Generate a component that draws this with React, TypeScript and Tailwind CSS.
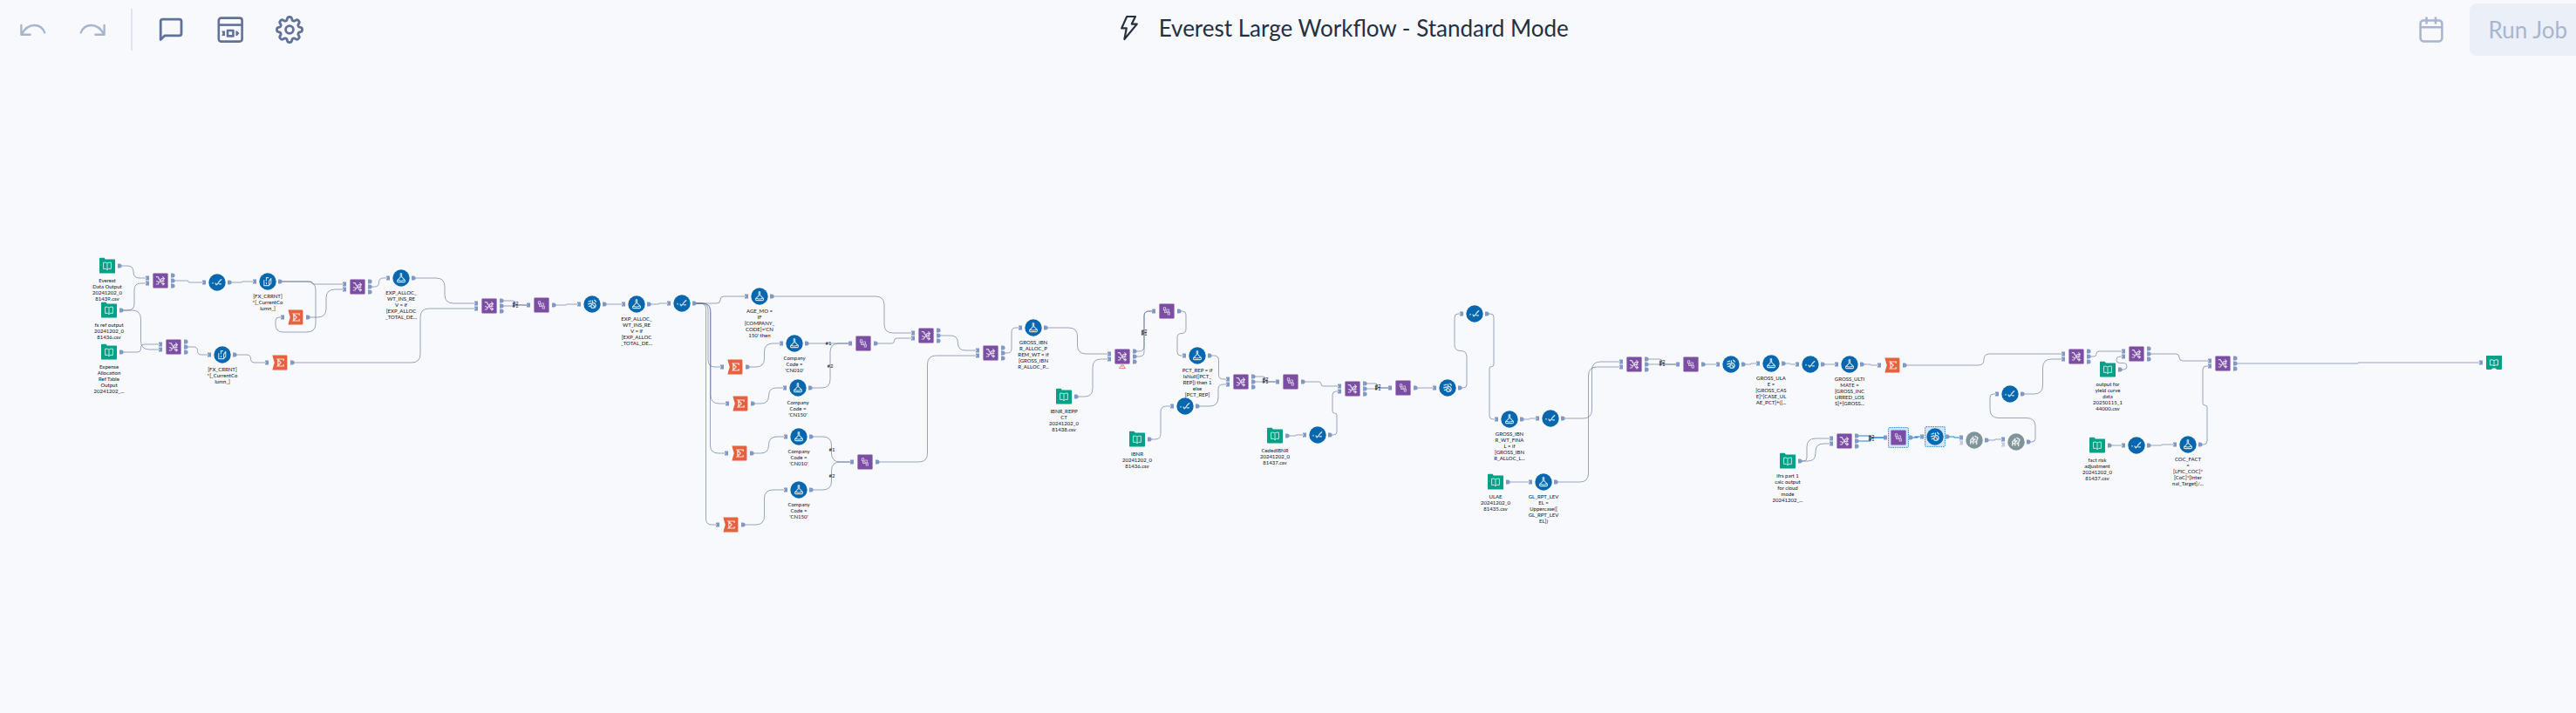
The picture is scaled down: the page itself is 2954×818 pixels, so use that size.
import type { ReactNode } from "react";

type Kind = "file" | "join" | "union" | "select" | "multi" | "formula" | "cleanse" | "sum" | "tool" | "output";

interface FlowNode {
  id: string;
  kind: Kind;
  x: number;
  y: number;
  label?: string;
  selected?: boolean;
  warning?: boolean;
}

interface FlowEdge {
  from: string;
  to: string;
  out?: number;
  input?: number;
  via?: number;
  tag?: string;
  active?: boolean;
}

const HEADER_HEIGHT = 68;

const nodes: FlowNode[] = [
  { id: "f1", kind: "file", x: 123, y: 305, label: "Everest\nData Output\n20241202_0\n81439.csv" },
  { id: "f2", kind: "file", x: 125, y: 356, label: "fx ref output\n20241202_0\n81436.csv" },
  { id: "f3", kind: "file", x: 125, y: 404, label: "Expense\nAllocation\nRef Table\nOutput\n20241202_..." },
  { id: "j1", kind: "join", x: 184, y: 322 },
  { id: "s1", kind: "select", x: 249, y: 324 },
  { id: "m1", kind: "multi", x: 307, y: 323, label: "[FX_CRRNT]\n*[_CurrentCo\nlumn_]" },
  { id: "g1", kind: "sum", x: 339, y: 364 },
  { id: "j2", kind: "join", x: 410, y: 329 },
  { id: "a1", kind: "formula", x: 460, y: 319, label: "EXP_ALLOC_\nWT_INS_RE\nV = if\n[EXP_ALLOC\n_TOTAL_DE..." },
  { id: "j3", kind: "join", x: 199, y: 398 },
  { id: "m2", kind: "multi", x: 255, y: 407, label: "[FX_CRRNT]\n*[_CurrentCo\nlumn_]" },
  { id: "g2", kind: "sum", x: 321, y: 416 },
  { id: "j4", kind: "join", x: 561, y: 351 },
  { id: "u1", kind: "union", x: 621, y: 350 },
  { id: "c1", kind: "cleanse", x: 679, y: 349 },
  { id: "a2", kind: "formula", x: 730, y: 349, label: "EXP_ALLOC_\nWT_INS_RE\nV = if\n[EXP_ALLOC\n_TOTAL_DE..." },
  { id: "s2", kind: "select", x: 782, y: 348 },
  { id: "a3", kind: "formula", x: 871, y: 340, label: "AGE_MO =\nIF\n[COMPANY_\nCODE]='CN\n150' then" },
  { id: "g3", kind: "sum", x: 843, y: 421 },
  { id: "g4", kind: "sum", x: 849, y: 463 },
  { id: "g5", kind: "sum", x: 848, y: 520 },
  { id: "g6", kind: "sum", x: 838, y: 602 },
  { id: "a4", kind: "formula", x: 911, y: 394, label: "Company\nCode =\n'CN010'" },
  { id: "a5", kind: "formula", x: 915, y: 445, label: "Company\nCode =\n'CN150'" },
  { id: "a6", kind: "formula", x: 916, y: 501, label: "Company\nCode =\n'CN010'" },
  { id: "a7", kind: "formula", x: 916, y: 562, label: "Company\nCode =\n'CN150'" },
  { id: "u2", kind: "union", x: 990, y: 394 },
  { id: "u3", kind: "union", x: 992, y: 530 },
  { id: "j5", kind: "join", x: 1062, y: 385 },
  { id: "j6", kind: "join", x: 1136, y: 405 },
  { id: "a8", kind: "formula", x: 1185, y: 376, label: "GROSS_IBN\nR_ALLOC_P\nREM_WT = if\n[GROSS_IBN\nR_ALLOC_P..." },
  { id: "f4", kind: "file", x: 1220, y: 455, label: "IBNR_REPP\nCT\n20241202_0\n81438.csv" },
  { id: "j7", kind: "join", x: 1287, y: 409, warning: true },
  { id: "u4", kind: "union", x: 1338, y: 357 },
  { id: "a9", kind: "formula", x: 1373, y: 408, label: "PCT_REP = if\nIsNull([PCT_\nREP]) then 1\nelse\n[PCT_REP]" },
  { id: "s3", kind: "select", x: 1359, y: 466 },
  { id: "f5", kind: "file", x: 1304, y: 504, label: "IBNR\n20241202_0\n81436.csv" },
  { id: "j8", kind: "join", x: 1423, y: 438 },
  { id: "u5", kind: "union", x: 1480, y: 438 },
  { id: "f6", kind: "file", x: 1462, y: 500, label: "CededIBNR\n20241202_0\n81437.csv" },
  { id: "s4", kind: "select", x: 1511, y: 499 },
  { id: "j9", kind: "join", x: 1551, y: 446 },
  { id: "u6", kind: "union", x: 1609, y: 445 },
  { id: "c2", kind: "cleanse", x: 1660, y: 445 },
  { id: "s5", kind: "select", x: 1691, y: 360 },
  { id: "a10", kind: "formula", x: 1731, y: 481, label: "GROSS_IBN\nR_WT_FINA\nL = if\n[GROSS_IBN\nR_ALLOC_L..." },
  { id: "s6", kind: "select", x: 1778, y: 480 },
  { id: "f7", kind: "file", x: 1715, y: 553, label: "ULAE\n20241202_0\n81435.csv" },
  { id: "a11", kind: "formula", x: 1770, y: 553, label: "GL_RPT_LEV\nEL =\nUppercase([\nGL_RPT_LEV\nEL])" },
  { id: "j10", kind: "join", x: 1874, y: 418 },
  { id: "u7", kind: "union", x: 1939, y: 418 },
  { id: "c3", kind: "cleanse", x: 1985, y: 418 },
  { id: "a12", kind: "formula", x: 2031, y: 417, label: "GROSS_ULA\nE =\n[GROSS_CAS\nE]*[CASE_UL\nAE_PCT]+([..." },
  { id: "s7", kind: "select", x: 2076, y: 418 },
  { id: "a13", kind: "formula", x: 2121, y: 418, label: "GROSS_ULTI\nMATE =\n[GROSS_INC\nURRED_LOS\nS]+[GROSS..." },
  { id: "g7", kind: "sum", x: 2170, y: 419 },
  { id: "f8", kind: "file", x: 2050, y: 529, label: "ifrs part 1\ncalc output\nfor cloud\nmode\n20241202_..." },
  { id: "j11", kind: "join", x: 2115, y: 506 },
  { id: "u8", kind: "union", x: 2177, y: 502, selected: true },
  { id: "c4", kind: "cleanse", x: 2219, y: 501, selected: true },
  { id: "t1", kind: "tool", x: 2264, y: 505 },
  { id: "t2", kind: "tool", x: 2312, y: 507 },
  { id: "s8", kind: "select", x: 2305, y: 452 },
  { id: "j12", kind: "join", x: 2381, y: 409 },
  { id: "f9", kind: "file", x: 2417, y: 424, label: "output for\nyield curve\ndata\n20250115_1\n44000.csv" },
  { id: "j13", kind: "join", x: 2450, y: 406 },
  { id: "f10", kind: "file", x: 2405, y: 511, label: "fact risk\nadjustment\n20241202_0\n81437.csv" },
  { id: "s9", kind: "select", x: 2450, y: 511 },
  { id: "a14", kind: "formula", x: 2509, y: 510, label: "COC_FACT\n=\n[LFIC_COC]*\n[CoC]*[Inter\nnal_Target]/..." },
  { id: "j14", kind: "join", x: 2549, y: 417 },
  { id: "o1", kind: "output", x: 2860, y: 416 },
];

const edges: FlowEdge[] = [
  { from: "f1", to: "j1" },
  { from: "f2", to: "j1", input: 1 },
  { from: "f2", to: "j3", input: 1 },
  { from: "f3", to: "j3" },
  { from: "j1", to: "s1", out: 1 },
  { from: "s1", to: "m1" },
  { from: "m1", to: "j2" },
  { from: "g1", to: "j2", input: 1 },
  { from: "j2", to: "a1", out: 1 },
  { from: "j3", to: "m2", out: 1 },
  { from: "m2", to: "g2" },
  { from: "a1", to: "j4" },
  { from: "g2", to: "j4", input: 1, via: 482 },
  { from: "j4", to: "u1", out: 0, tag: "#2" },
  { from: "j4", to: "u1", out: 1, tag: "#1" },
  { from: "u1", to: "c1" },
  { from: "c1", to: "a2" },
  { from: "a2", to: "s2" },
  { from: "s2", to: "a3" },
  { from: "s2", to: "g3" },
  { from: "s2", to: "g4" },
  { from: "s2", to: "g5" },
  { from: "s2", to: "g6" },
  { from: "g3", to: "a4" },
  { from: "g4", to: "a5" },
  { from: "g5", to: "a6" },
  { from: "g6", to: "a7" },
  { from: "a3", to: "j5", via: 1014 },
  { from: "a4", to: "u2", tag: "#1" },
  { from: "a5", to: "u2", tag: "#2" },
  { from: "a6", to: "u3", tag: "#1" },
  { from: "a7", to: "u3", tag: "#2" },
  { from: "u2", to: "j5", input: 1 },
  { from: "u3", to: "j6", input: 1 },
  { from: "j5", to: "j6", out: 1 },
  { from: "j6", to: "a8", out: 1 },
  { from: "a8", to: "j7" },
  { from: "f4", to: "j7", input: 1 },
  { from: "j7", to: "u4", out: 0, tag: "#2" },
  { from: "j7", to: "u4", out: 1, tag: "#1" },
  { from: "u4", to: "a9" },
  { from: "a9", to: "j8" },
  { from: "f5", to: "s3" },
  { from: "s3", to: "j8", input: 1, via: 1397 },
  { from: "j8", to: "u5", out: 0, tag: "#2" },
  { from: "j8", to: "u5", out: 1, tag: "#1" },
  { from: "u5", to: "j9" },
  { from: "f6", to: "s4" },
  { from: "s4", to: "j9", input: 1 },
  { from: "j9", to: "u6", out: 0, tag: "#2" },
  { from: "j9", to: "u6", out: 1, tag: "#1" },
  { from: "u6", to: "c2" },
  { from: "c2", to: "s5" },
  { from: "s5", to: "a10" },
  { from: "a10", to: "s6" },
  { from: "s6", to: "j10" },
  { from: "f7", to: "a11" },
  { from: "a11", to: "j10", input: 1 },
  { from: "j10", to: "u7", out: 0, tag: "#2" },
  { from: "j10", to: "u7", out: 1, tag: "#1" },
  { from: "u7", to: "c3" },
  { from: "c3", to: "a12" },
  { from: "a12", to: "s7" },
  { from: "s7", to: "a13" },
  { from: "a13", to: "g7" },
  { from: "g7", to: "j12" },
  { from: "f8", to: "j11", via: 2072 },
  { from: "f8", to: "j11", input: 1 },
  { from: "j11", to: "u8", out: 0, tag: "#2", active: true },
  { from: "j11", to: "u8", out: 1, tag: "#1", active: true },
  { from: "u8", to: "c4", active: true },
  { from: "c4", to: "t1", active: true },
  { from: "t1", to: "t2" },
  { from: "t2", to: "s8" },
  { from: "s8", to: "j12", input: 1 },
  { from: "j12", to: "j13", out: 1, via: 2404 },
  { from: "f9", to: "j13", input: 1 },
  { from: "f10", to: "s9" },
  { from: "s9", to: "a14" },
  { from: "a14", to: "j14", input: 1 },
  { from: "j13", to: "j14", out: 1 },
  { from: "j14", to: "o1", out: 1 },
];

const byId = new Map(nodes.map((n) => [n.id, n]));

type Point = [number, number];

function inputs(n: FlowNode): Point[] {
  if (n.kind === "file") return [];
  if (n.kind === "join" || n.kind === "tool") return [[n.x - 15, n.y - 3], [n.x - 15, n.y + 3]];
  return [[n.x - 15, n.y]];
}

function outputs(n: FlowNode): Point[] {
  if (n.kind === "output") return [];
  if (n.kind === "join") return [[n.x + 14, n.y - 6], [n.x + 14, n.y], [n.x + 14, n.y + 6]];
  return [[n.x + 14, n.y]];
}

function rounded(points: Point[], radius = 10): string {
  let d = `M${points[0][0]} ${points[0][1]}`;
  for (let i = 1; i < points.length - 1; i++) {
    const [px, py] = points[i - 1];
    const [x, y] = points[i];
    const [nx, ny] = points[i + 1];
    const a = Math.abs(x - px) + Math.abs(y - py);
    const b = Math.abs(nx - x) + Math.abs(ny - y);
    const r = Math.min(radius, a / 2, b / 2);
    if (r === 0) continue;
    d += `L${x - Math.sign(x - px) * r} ${y - Math.sign(y - py) * r}`;
    d += `Q${x} ${y} ${x + Math.sign(nx - x) * r} ${y + Math.sign(ny - y) * r}`;
  }
  const last = points[points.length - 1];
  return `${d}L${last[0]} ${last[1]}`;
}

function route(e: FlowEdge): { d: string; mid: Point } {
  const [sx, sy] = outputs(byId.get(e.from)!)[e.out ?? 0];
  const [tx, ty] = inputs(byId.get(e.to)!)[e.input ?? 0];
  const midY = (sy + ty) / 2;
  if (tx - sx < 16) {
    return {
      d: rounded([[sx, sy], [sx + 8, sy], [sx + 8, midY], [tx - 8, midY], [tx - 8, ty], [tx, ty]]),
      mid: [(sx + tx) / 2, midY],
    };
  }
  const midX = e.via ?? (sx + tx) / 2;
  return { d: rounded([[sx, sy], [midX, sy], [midX, ty], [tx, ty]]), mid: [midX, midY] };
}

function Connections() {
  return (
    <svg className="absolute inset-0 h-full w-full" aria-hidden="true">
      <g transform={`translate(0 ${-HEADER_HEIGHT})`}>
        <g fill="none" stroke="#5b698f" strokeWidth="0.6">
          {edges.map((e, i) => (
            <path
              key={i}
              d={route(e).d}
              stroke={e.active ? "#1585e8" : undefined}
              strokeWidth={e.active ? 1.1 : undefined}
            />
          ))}
          <path d={rounded([[321, 323], [362, 323], [362, 381], [316, 381], [316, 364], [324, 364]])} />
        </g>
        {nodes.map((n) => (
          <g key={n.id} fill="#8299c3">
            {inputs(n).map(([x, y], i) => (
              <path
                key={`i${i}`}
                d={`M${x - 2} ${y - 2.5}h4v5h-4v-1.6h1v-1.8h-1z`}
                opacity={n.kind === "tool" && i === 1 ? 0.45 : 1}
              />
            ))}
            {outputs(n).map(([x, y], i) => (
              <path key={`o${i}`} d={`M${x - 2} ${y - 2.5}h2q2.6 0 2.6 2.5t-2.6 2.5h-2z`} />
            ))}
          </g>
        ))}
      </g>
    </svg>
  );
}

function Disc({ color, children }: { color: string; children: ReactNode }) {
  return (
    <>
      <circle r="9.7" fill={color} />
      <g fill="none" stroke="#fff" strokeWidth="1.1" strokeOpacity="0.8" strokeLinecap="round" strokeLinejoin="round">
        {children}
      </g>
    </>
  );
}

function Tile({ children }: { children: ReactNode }) {
  return (
    <>
      <rect x="-8.6" y="-8.6" width="17.2" height="17.2" rx="1" fill="#7b4ea3" />
      <g fill="none" stroke="#fff" strokeWidth="1.1" strokeOpacity="0.75" strokeLinecap="round" strokeLinejoin="round">
        {children}
      </g>
    </>
  );
}

function Glyph({ kind }: { kind: Kind }) {
  switch (kind) {
    case "file":
      return (
        <>
          <path d="M-9 -8.5Q-9 -9.2 -8 -9.2H-3.4L-2.2 -7.6H8.4Q9 -7.6 9 -7V7.8Q9 8.6 8.2 8.6H-8.2Q-9 8.6 -9 7.8Z" fill="#05a088" />
          <path
            d="M-4.4 -3.8Q-2 -4.4 0 -3Q2 -4.4 4.4 -3.8V3.4H2M-4.4 -3.8V3.4H-2M0 -2.6V4.6M-1.8 2.8L0 4.8L1.8 2.8"
            fill="none"
            stroke="#fff"
            strokeOpacity="0.75"
            strokeWidth="1"
          />
        </>
      );
    case "output":
      return (
        <>
          <path d="M-9 -8H9V7Q9 8 8 8H3L2 6.5H-2L-3 8H-8Q-9 8 -9 7Z" fill="#05a088" />
          <path
            d="M-4.5 -3Q-2 -3.8 0 -2.4Q2 -3.8 4.5 -3V3Q2 2.4 0 3.6Q-2 2.4 -4.5 3ZM0 -2.4V3.4"
            fill="none"
            stroke="#fff"
            strokeOpacity="0.8"
            strokeWidth="1"
          />
        </>
      );
    case "sum":
      return (
        <>
          <path d="M-8.6 -8.4H7.6Q8.4 -8.4 8.4 -7.6V7.6Q8.4 8.4 7.6 8.4H-8.6L-7.6 4.4L-6.2 0L-7.6 -4.4Z" fill="#e8613f" />
          <path
            d="M4.2 -2V-4H-2.8L1.2 0L-2.8 4H4.2V2M-2.2 -4V4"
            fill="none"
            stroke="#fff"
            strokeOpacity="0.8"
            strokeWidth="1.2"
          />
        </>
      );
    case "join":
      return (
        <Tile>
          <path d="M-4.8 -4.4H-2.8L1.8 3.6H4.4M-4.8 4H-2.8L1.2 -2.4H4.6M-2.8 -4.4L-1.6 -1.6M-4.4 0.6L-2.4 1.6M2.6 -4.4L4.6 -2.4L2.8 -0.6M2.6 1.8L4.6 3.6L2.8 5M0.6 0.4H4" />
        </Tile>
      );
    case "union":
      return (
        <Tile>
          <g strokeOpacity="0.6">
            <path d="M-3.6 -4.2H-1.4V-1.4H-3.6ZM1.2 1.2H3.4V4H1.2ZM-1.4 -1.4L1.2 1.2M-2.4 -1V1.4H1M0 -2H2.4V1" />
          </g>
        </Tile>
      );
    case "select":
      return (
        <Disc color="#0767ae">
          <path d="M-5 0.4V1M-2 1L-0.8 2.8L1.6 0.6M1.8 -0.6L4.8 -3.4M2.4 1.8H4.4" strokeWidth="1.3" />
        </Disc>
      );
    case "multi":
      return (
        <Disc color="#0767ae">
          <path d="M-1.6 -1V-4.4H0.6M-4.2 -1.4V4.6H1.6V-0.6L3.8 -3.6M1.6 4.4L3.8 2V-3.4M-1.4 1.4V2.8" />
        </Disc>
      );
    case "formula":
      return (
        <Disc color="#0767ae">
          <path d="M-0.8 -5.2H0.6V-1.4L4.4 2.4Q4.8 4.6 3.2 4.6H-3.2Q-4.8 4.6 -4.4 2.6L-0.8 -0.8V-5.2M-3.6 2.2Q0 3.8 3.6 2" />
        </Disc>
      );
    case "cleanse":
      return (
        <Disc color="#0767ae">
          <path
            d="M-4 -3L-1.4 -3.8M-4.4 -0.2L-1.4 -1M-3.6 2.6L-1 1.6M0.4 -4.2V-1.4Q3.6 -2 4.2 1.4Q3.8 4.6 0.4 4.4Q-1.6 4.2 -1 1.6M2.6 -4.8L4.4 -3M0.8 0.6L2.6 2.4M0.4 -1.4L-1 1.6"
            strokeWidth="1.3"
          />
        </Disc>
      );
    case "tool":
      return (
        <Disc color="#7f9499">
          <path d="M-4.2 4V0L-1.2 -3.6V4M1 -4.6L4 -2.6L2.6 1V4.4M-1.2 0.6L1 -1.4M-4 1.8H-1.4M1 2L2.6 1" strokeWidth="1.5" />
        </Disc>
      );
  }
}

function NodeView({ node }: { node: FlowNode }) {
  return (
    <div
      className="absolute flex w-12 flex-col items-center"
      style={{ left: node.x - 24, top: node.y - HEADER_HEIGHT - 12 }}
    >
      <svg viewBox="-12 -12 24 24" className="size-6 shrink-0 overflow-visible" aria-hidden="true">
        {node.selected && (
          <rect x="-11.4" y="-11.4" width="22.8" height="22.8" rx="1" fill="#d3e6fb" stroke="#1585e8" strokeWidth="0.9" strokeDasharray="1.6 1" />
        )}
        <Glyph kind={node.kind} />
        {node.warning && (
          <path d="M0 8L3.4 13.6H-3.4ZM0 10V12" fill="#fdf1ee" stroke="#ee7a60" strokeWidth="0.9" strokeLinejoin="round" />
        )}
      </svg>
      {node.label && (
        <p className="mt-px text-center font-['Lato',sans-serif] text-[6px] leading-[7px] font-medium whitespace-pre text-[#1f2937]">
          {node.label}
        </p>
      )}
    </div>
  );
}

function Tags() {
  return (
    <>
      {edges.map((e, i) => {
        if (!e.tag) return null;
        const [x, y] = route(e).mid;
        return (
          <span
            key={i}
            className="absolute w-4 text-center font-['Lato',sans-serif] text-[6px] leading-[8px] font-medium text-[#1f2937]"
            style={{ left: Math.round(x) - 8, top: Math.round(y) - HEADER_HEIGHT - 4 }}
          >
            {e.tag}
          </span>
        );
      })}
    </>
  );
}

function UndoIcon({ flip = false }: { flip?: boolean }) {
  return (
    <svg viewBox="0 0 32 32" className="size-8" fill="none" stroke="#a9b5cc" strokeWidth="2.4" strokeLinecap="round" strokeLinejoin="round" aria-hidden="true">
      <path d="M2.4 11V21.8H12.6M2.8 21.4C6.5 14.6 11 11 17.4 11C23.4 11 27.2 14.2 29.2 19.4" transform={flip ? "translate(32 0) scale(-1 1)" : undefined} />
    </svg>
  );
}

function gearPath(): string {
  const pts: string[] = [];
  for (let i = 0; i < 160; i++) {
    const t = (i / 160) * Math.PI * 2;
    const r = 12.7 + 1.9 * Math.tanh(1.8 * (Math.cos(8 * t) + 0.1));
    pts.push(`${(16 + r * Math.cos(t)).toFixed(2)} ${(16 + r * Math.sin(t)).toFixed(2)}`);
  }
  return `M${pts.join("L")}Z`;
}

function ToolButton({ label, disabled, children }: { label: string; disabled?: boolean; children: ReactNode }) {
  return (
    <button type="button" aria-label={label} disabled={disabled} className="flex size-12 shrink-0 items-center justify-center">
      {children}
    </button>
  );
}

function Header() {
  return (
    <header className="flex h-17 shrink-0 items-center">
      <div className="flex items-center gap-5 pl-3.5">
        <ToolButton label="Undo" disabled>
          <UndoIcon />
        </ToolButton>
        <ToolButton label="Redo" disabled>
          <UndoIcon flip />
        </ToolButton>
        <div className="h-12 w-0.5 bg-[#dde4f1]" />
        <ToolButton label="Comments">
          <svg viewBox="0 0 32 32" className="size-8" fill="none" stroke="#62719a" strokeWidth="2.8" strokeLinejoin="round" aria-hidden="true">
            <path d="M4.2 27.6V6.4Q4.2 4.2 6.4 4.2H25.8Q28 4.2 28 6.4V20.6Q28 22.8 25.8 22.8H9Z" />
          </svg>
        </ToolButton>
        <ToolButton label="Configuration window">
          <svg viewBox="0 0 32 32" className="size-8" fill="none" stroke="#62719a" strokeWidth="2.6" strokeLinejoin="round" aria-hidden="true">
            <rect x="2.8" y="2.6" width="26.8" height="27" rx="2.8" />
            <path d="M3 10.6H29.4" />
            <rect x="13" y="17" width="6.4" height="6.4" />
            <path d="M6.2 17.6H10V23H6.2L7.4 20.3ZM22.4 17.6H24L26.4 20.3L24 23H22.4Z" fill="#62719a" stroke="none" />
          </svg>
        </ToolButton>
        <ToolButton label="Settings">
          <svg viewBox="0 0 32 32" className="size-8 overflow-visible" fill="none" stroke="#62719a" strokeWidth="2.8" strokeLinejoin="round" aria-hidden="true">
            <path d={gearPath()} />
            <circle cx="16" cy="16" r="4.4" />
          </svg>
        </ToolButton>
      </div>
      <div className="flex min-w-0 flex-1 items-center justify-center gap-6 pr-9 pb-1">
        <svg viewBox="0 0 20 30" className="h-7.5 w-5 shrink-0" fill="none" stroke="#242f40" strokeWidth="2.2" strokeLinejoin="round" aria-hidden="true">
          <path d="M7.2 2H17L12.8 10.6H18.8L4.4 28L6.8 15.4H1.2Z" />
        </svg>
        <h1 className="truncate text-[26px] leading-8 text-[#242f40]">Everest Large Workflow - Standard Mode</h1>
      </div>
      <div className="-mr-3 flex shrink-0 items-center gap-5">
        <ToolButton label="Schedule" disabled>
          <svg viewBox="0 0 32 32" className="size-8" fill="none" stroke="#a9b5cc" strokeWidth="2.5" aria-hidden="true">
            <rect x="3.6" y="5.4" width="24.8" height="24" rx="3.6" />
            <path d="M3.6 13.2H28.4M10.6 1.4V9.4M21 1.4V9.4" />
          </svg>
        </ToolButton>
        <button type="button" disabled className="h-15 rounded-lg bg-[#ebf0f8] px-5.5 text-[26px] leading-8 text-[#a9b5cc]">
          Run Job
        </button>
      </div>
    </header>
  );
}

export default function App() {
  return (
    <div className="flex min-h-screen flex-col overflow-hidden bg-[#f7f9fd] font-['Lato',sans-serif]">
      <Header />
      <main className="relative flex-1 overflow-hidden">
        <Connections />
        {nodes.map((n) => (
          <NodeView key={n.id} node={n} />
        ))}
        <Tags />
      </main>
    </div>
  );
}
